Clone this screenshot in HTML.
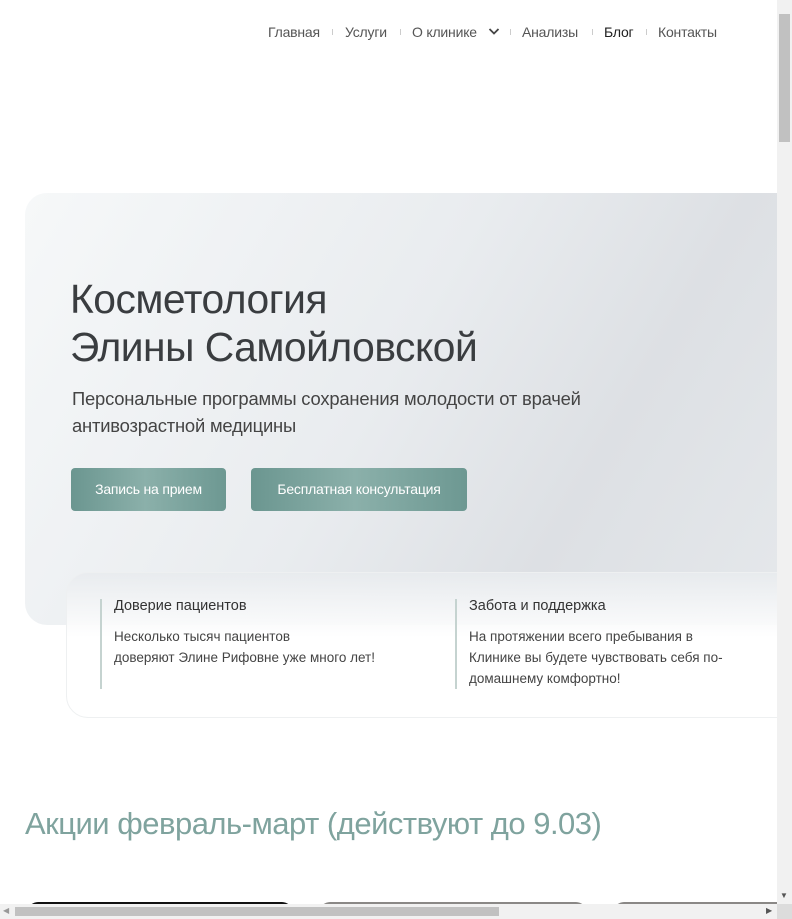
<!DOCTYPE html>
<html><head><meta charset="utf-8"><style>
html,body{margin:0;padding:0;}
body{width:792px;height:919px;overflow:hidden;position:relative;background:#fff;font-family:"Liberation Sans","DejaVu Sans",sans-serif;color:#333;}
.nav{position:absolute;top:24px;left:0;height:16px;font-size:14px;color:#555;}
.nav span{position:absolute;top:0;white-space:nowrap;letter-spacing:-0.2px}
.sep{position:absolute;top:29px;width:1px;height:6px;background:#ccc}
.hero{position:absolute;left:25px;top:193px;width:790px;height:432px;border-radius:22px;background:linear-gradient(120deg,#f6f8f9 0%,#e9ecef 45%,#dde0e4 70%,#e6e9ec 100%);}
h1{position:absolute;left:70px;top:275px;margin:0;font-weight:300;font-size:40.8px;line-height:48px;color:#3a3d40;letter-spacing:-0.5px;white-space:nowrap}
.sub{position:absolute;left:72px;top:385px;font-size:18.4px;line-height:27px;color:#444;letter-spacing:-0.2px;white-space:nowrap}
.btn{position:absolute;top:468px;height:43px;border-radius:4px;color:#fff;font-size:14px;line-height:43px;text-align:center;background:linear-gradient(90deg,#6b9690 0%,#8bb0aa 48%,#6d9892 100%);letter-spacing:-0.2px}
.card{position:absolute;left:66px;top:572px;width:760px;height:144px;border-radius:22px;border:1px solid #eef0f1;background:linear-gradient(180deg,rgba(232,235,238,0.9) 0%,rgba(255,255,255,0.95) 45%,#fff 100%);}
.col{position:absolute;top:599px;border-left:2px solid #c5d3d0;padding-left:12px;height:90px}
.col b{display:block;font-weight:normal;font-size:14.5px;color:#333;line-height:14px;margin-top:0}
.col p{margin:13px 0 0;font-size:13.5px;line-height:21px;color:#444}
h2{position:absolute;left:25px;top:806px;margin:0;font-weight:300;font-size:31px;color:#7fa39e;white-space:nowrap;letter-spacing:-0.5px}
.bc{position:absolute;top:902px;height:10px;border-radius:10px 10px 0 0}
.vs{position:absolute;left:777px;top:0;width:15px;height:904px;background:#f1f1f1}
.vs i{position:absolute;left:2px;top:14px;width:11px;height:128px;background:#c1c1c1}
.hs{position:absolute;left:0;top:904px;width:777px;height:15px;background:#f1f1f1}
.hs i{position:absolute;left:15px;top:3px;width:484px;height:9px;background:#c1c1c1}
.corner{position:absolute;left:777px;top:904px;width:15px;height:15px;background:#dcdcdc}
</style></head><body>
<div class="nav">
<span style="left:268px">Главная</span>
<span style="left:345px">Услуги</span>
<span style="left:412px">О клинике</span>
<span style="left:522px">Анализы</span>
<span style="left:604px;color:#222">Блог</span>
<span style="left:658px">Контакты</span>
</div>
<div class="sep" style="left:332px"></div><div class="sep" style="left:400px"></div><div class="sep" style="left:510px"></div><div class="sep" style="left:592px"></div><div class="sep" style="left:646px"></div>
<svg style="position:absolute;left:488px;top:27px" width="12" height="9" viewBox="0 0 12 9"><path d="M1.5 2 L6 6.5 L10.5 2" fill="none" stroke="#444" stroke-width="1.8"/></svg>
<div class="hero"></div>
<h1>Косметология<br>Элины Самойловской</h1>
<div class="sub">Персональные программы сохранения молодости от врачей<br>антивозрастной медицины</div>
<div class="btn" style="left:71px;width:155px">Запись на прием</div>
<div class="btn" style="left:251px;width:216px">Бесплатная консультация</div>
<div class="card"></div>
<div class="col" style="left:100px"><b>Доверие пациентов</b><p>Несколько тысяч пациентов<br>доверяют Элине Рифовне уже много лет!</p></div>
<div class="col" style="left:455px"><b>Забота и поддержка</b><p>На протяжении всего пребывания в<br>Клинике вы будете чувствовать себя по-<br>домашнему комфортно!</p></div>
<h2>Акции февраль-март (действуют до 9.03)</h2>
<div class="bc" style="left:28px;width:264px;background:#111"></div>
<div class="bc" style="left:320px;width:266px;background:#8a8886"></div>
<div class="bc" style="left:614px;width:180px;background:#8a8886"></div>
<div class="vs"><i></i></div>
<div class="hs"><i></i></div>
<div class="corner"></div>
<div style="position:absolute;left:780px;top:891px;font-size:8px;color:#555">▼</div>
<div style="position:absolute;left:3px;top:906px;font-size:8px;color:#999">◀</div>
<div style="position:absolute;left:766px;top:906px;font-size:8px;color:#555">▶</div>
</body></html>
